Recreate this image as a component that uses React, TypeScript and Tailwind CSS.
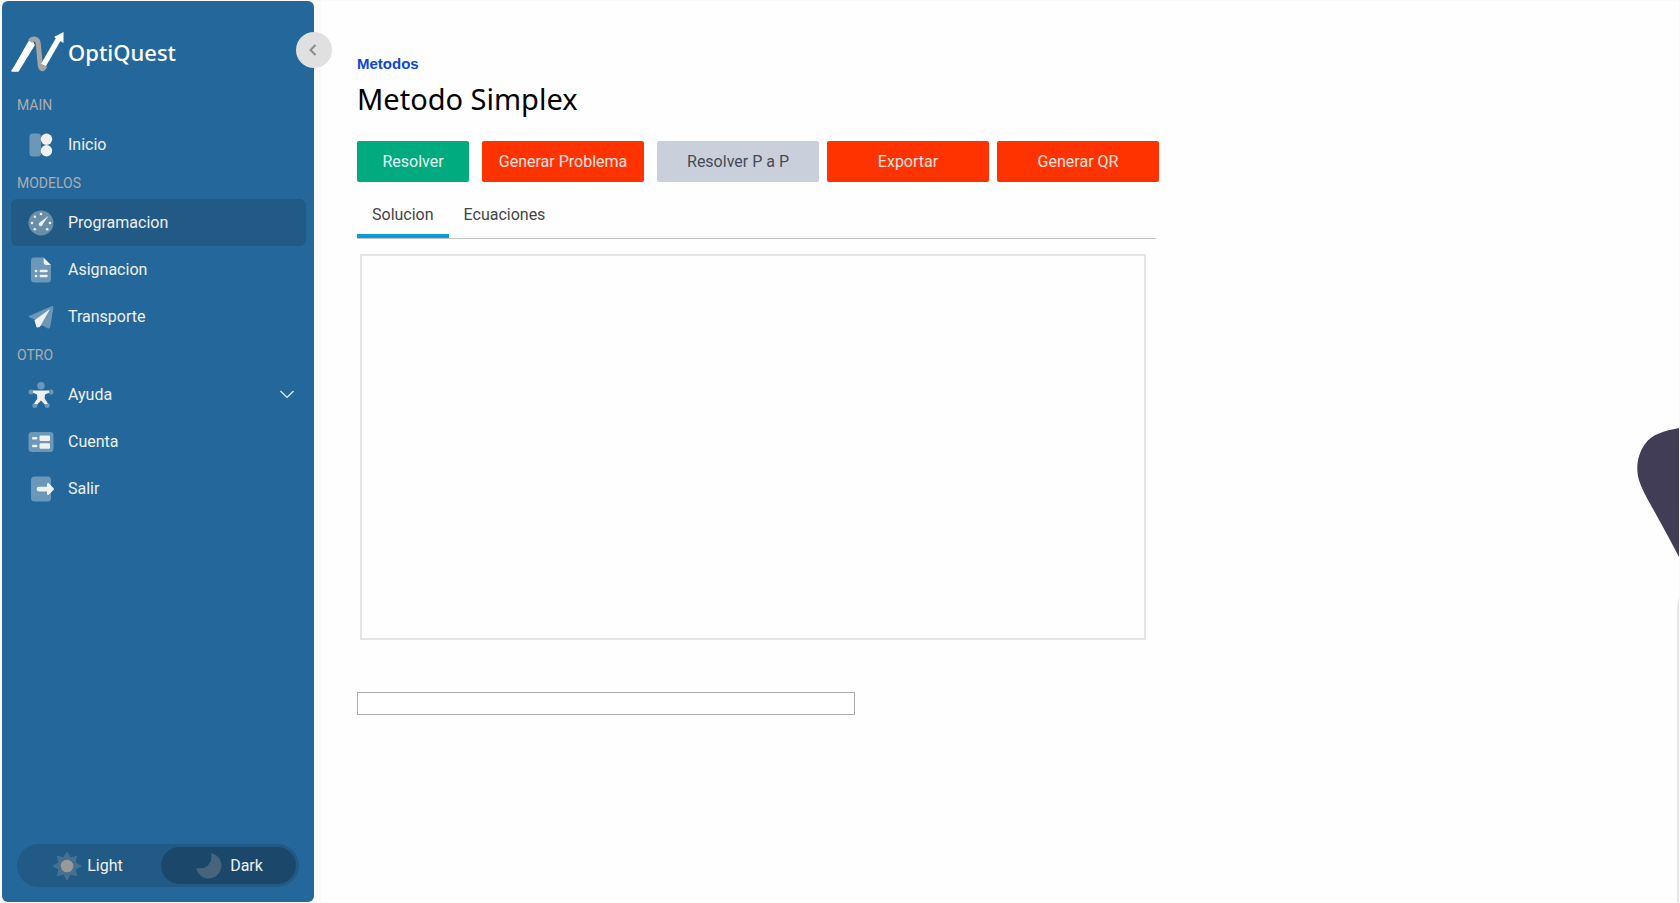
import React, { useState } from "react";

const FAINT = "rgba(240,240,240,0.35)";
const SOLID = "#f0f0f0";

function Logo() {
  return (
    <svg width="54" height="42" viewBox="0 0 54 42" aria-hidden="true">
      <path d="M1 39 H7 L23 13 L21 8.500 Q18.500 8 17.500 10.500 L3 36 Z" fill="#fff" stroke="#fff" strokeWidth="1.500" strokeLinejoin="round" />
      <path d="M19 9.500 C22 5.500 27 6.500 27.300 12 L29 31 C29.400 38 32 38 34 34" fill="none" stroke="#a5a5a5" strokeWidth="5" />
      <path d="M32.500 33 L47.500 7" fill="none" stroke="#fff" strokeWidth="5.500" />
      <path d="M43 5 L52.500 0 L52.500 11 Z" fill="#fff" />
    </svg>
  );
}

function HomeIcon() {
  return (
    <svg width="26" height="26" viewBox="0 0 26 26" aria-hidden="true">
      <rect x="1.500" y="1.500" width="11.500" height="23" rx="3" fill={FAINT} />
      <circle cx="18.500" cy="7.200" r="5.700" fill={SOLID} />
      <circle cx="18.500" cy="18.700" r="5.700" fill={SOLID} />
    </svg>
  );
}

function GaugeIcon() {
  const dots = [[13, 4], [6.8, 6.8], [4, 13], [22, 13], [6.8, 19.2], [19.2, 19.2]];
  return (
    <svg width="26" height="26" viewBox="0 0 26 26" aria-hidden="true">
      <circle cx="13" cy="13" r="12.500" fill={FAINT} />
      {dots.map(([x, y]) => (
        <circle key={`${x}-${y}`} cx={x} cy={y} r="1.300" fill={SOLID} />
      ))}
      <path d="M20.600 5.700 L14.800 14 A2 2 0 1 1 11.700 12.500 Z" fill={SOLID} />
    </svg>
  );
}

function DocumentIcon() {
  return (
    <svg width="26" height="26" viewBox="0 0 26 26" aria-hidden="true">
      <path d="M6 .5 H15.500 V5 Q15.500 8 18 8 H23 V22 Q23 25.500 19.500 25.500 H6.500 Q3 25.500 3 22 V4 Q3 .5 6 .5 Z" fill={FAINT} />
      <path d="M15.500 .5 L23 8 H18 Q15.500 8 15.500 5 Z" fill={SOLID} />
      <circle cx="8" cy="14" r="1.300" fill={SOLID} />
      <circle cx="8" cy="19" r="1.300" fill={SOLID} />
      <path d="M12.800 14 H18.500 M12.800 19 H18.500" stroke={SOLID} strokeWidth="2.500" strokeLinecap="round" />
    </svg>
  );
}

function PlaneIcon() {
  return (
    <svg width="26" height="26" viewBox="0 0 26 26" aria-hidden="true">
      <path d="M1.500 11.800 L23.500 2.200 Q25.700 1.500 25.400 3.800 L22.300 22.800 Q21.700 25 19.500 24.200 L14.500 21.500 L9.500 23.600 L6.500 15.500 L1.500 13.500 Q.2 12.600 1.500 11.800 Z" fill={FAINT} />
      <path d="M22 5 L13 21 Q11.500 23.500 9.500 23.600 Q8.500 23.500 8.200 22.300 L6.500 16.300 Z" fill={SOLID} />
    </svg>
  );
}

function PersonIcon() {
  return (
    <svg width="26" height="26" viewBox="0 0 26 26" aria-hidden="true">
      <circle cx="13" cy="3.700" r="3.700" fill={FAINT} />
      <circle cx="3" cy="10" r="2.500" fill={FAINT} />
      <circle cx="23" cy="10" r="2.500" fill={FAINT} />
      <circle cx="6.800" cy="23.500" r="2.500" fill={FAINT} />
      <circle cx="19.200" cy="23.500" r="2.500" fill={FAINT} />
      <path d="M5 8.500 H21 L21 10.800 L17 12.500 L16.600 16.500 L20 21.500 L16.800 22.500 L13 18.500 L9.200 22.500 L6 21.500 L9.400 16.500 L9 12.500 L5 10.800 Z" fill={SOLID} />
    </svg>
  );
}

function CardIcon() {
  return (
    <svg width="26" height="26" viewBox="0 0 26 26" aria-hidden="true">
      <rect x=".5" y="3" width="25" height="20" rx="3.500" fill={FAINT} />
      <rect x="11.500" y="6.500" width="10.500" height="5.500" rx="1.300" fill={SOLID} />
      <rect x="11.500" y="14.300" width="10.500" height="5.500" rx="1.300" fill={SOLID} />
      <path d="M5.200 9.300 H8.200 M5.200 17 H8.200" stroke={SOLID} strokeWidth="2.400" strokeLinecap="round" />
    </svg>
  );
}

function ExitIcon() {
  return (
    <svg width="26" height="26" viewBox="0 0 26 26" aria-hidden="true">
      <rect x="3" y=".5" width="20" height="25" rx="3.500" fill={FAINT} />
      <path d="M11 10.700 H19 V8 Q19.500 6.500 21 7.500 L25.700 12.300 Q26.200 13 25.700 13.700 L21 18.500 Q19.500 19.500 19 18 V15.500 H11 A2.400 2.400 0 0 1 11 10.700 Z" fill={SOLID} />
    </svg>
  );
}

function SunIcon() {
  return (
    <svg width="30" height="30" viewBox="0 0 30 30" aria-hidden="true">
      <path
        d="M15 1.500 L18.200 7.200 L24.500 5.500 L22.800 11.800 L28.500 15 L22.800 18.200 L24.500 24.500 L18.200 22.800 L15 28.500 L11.800 22.800 L5.500 24.500 L7.200 18.200 L1.500 15 L7.200 11.800 L5.500 5.500 L11.800 7.200 Z"
        fill="#466f90" stroke="#466f90" strokeWidth="1.500" strokeLinejoin="round"
      />
      <circle cx="15" cy="15" r="6.300" fill="#999" />
    </svg>
  );
}

function MoonIcon() {
  return (
    <svg width="26" height="26" viewBox="0 0 26 26" aria-hidden="true">
      <path d="M15 2 Q15.300 0 17.300 .7 A12.800 12.800 0 1 1 .7 17.300 Q0 15.300 2 15 Q8 16.300 11.800 12.500 Q16.300 8 15 2 Z" fill="#47647c" />
    </svg>
  );
}

type Item = { label: string; icon: React.ReactNode; active?: boolean; expandable?: boolean };

const SECTIONS: { title: string; items: Item[] }[] = [
  { title: "MAIN", items: [{ label: "Inicio", icon: <HomeIcon /> }] },
  {
    title: "MODELOS",
    items: [
      { label: "Programacion", icon: <GaugeIcon />, active: true },
      { label: "Asignacion", icon: <DocumentIcon /> },
      { label: "Transporte", icon: <PlaneIcon /> },
    ],
  },
  {
    title: "OTRO",
    items: [
      { label: "Ayuda", icon: <PersonIcon />, expandable: true },
      { label: "Cuenta", icon: <CardIcon /> },
      { label: "Salir", icon: <ExitIcon /> },
    ],
  },
];

function NavItem({ item }: { item: Item }) {
  return (
    <li>
      <a
        href="#"
        aria-current={item.active ? "page" : undefined}
        className={`flex h-[47px] items-center rounded-md pr-3 pl-[17px] text-base text-[#f0f0f0] ${item.active ? "bg-[#205a85]" : ""}`}
      >
        <span className="w-10">{item.icon}</span>
        <span className="flex-1">{item.label}</span>
        {item.expandable && (
          <svg width="14" height="9" viewBox="0 0 14 9" aria-hidden="true">
            <path d="M.5 1 L7 7.500 L13.500 1" fill="none" stroke="#f0f0f0" strokeWidth="1.200" />
          </svg>
        )}
      </a>
    </li>
  );
}

function Sidebar() {
  return (
    <aside className="relative z-10 flex w-[312px] shrink-0 flex-col rounded-md bg-[#24689b]">
      <div className="flex h-[89px] items-center gap-[3px] pt-[14px] pl-[9px]">
        <Logo />
        <span className="font-['Noto_Sans','Open_Sans',sans-serif] text-[22px] font-medium text-white">OptiQuest</span>
      </div>
      <button
        type="button"
        aria-label="Contraer menu"
        className="absolute top-[31px] -right-[18px] flex size-9 items-center justify-center rounded-full bg-[#e0e0e0] pr-0.5"
      >
        <svg width="8" height="12" viewBox="0 0 8 12" aria-hidden="true">
          <path d="M6.500 1 L1.500 6 L6.500 11" fill="none" stroke="#8a8a8a" strokeWidth="2" />
        </svg>
      </button>
      <nav className="flex-1 pr-2 pl-[9px]">
        {SECTIONS.map((section) => (
          <section key={section.title}>
            <h2 className="flex h-[31px] items-center pb-0.5 pl-[6px] text-sm text-[#adadad]">{section.title}</h2>
            <ul>
              {section.items.map((item) => (
                <NavItem key={item.label} item={item} />
              ))}
            </ul>
          </section>
        ))}
      </nav>
      <div className="mr-[15px] mb-[15px] ml-[15px] flex h-[43px] items-center rounded-full bg-[#205a85] p-[3px] text-base text-[#f0f0f0]">
        <button type="button" className="flex h-full flex-1 items-center justify-center gap-[5px] pr-1.5">
          <SunIcon />
          Light
        </button>
        <button type="button" className="flex h-full w-[135px] items-center justify-center gap-2 rounded-full bg-[#1b486a] pl-0.5">
          <MoonIcon />
          Dark
        </button>
      </div>
    </aside>
  );
}

const TABS = ["Solucion", "Ecuaciones"];

export default function App() {
  const [tab, setTab] = useState("Solucion");
  return (
    <div className="flex min-h-screen bg-[#fafafa] py-px pr-px pl-0.5 font-[Roboto,sans-serif]">
      <Sidebar />
      <main className="relative ml-[7px] flex-1 overflow-hidden bg-[#fefefe] pt-[51px] pl-9">
        <p className="font-['Liberation_Sans',Arial,sans-serif] text-[15px] leading-6 font-bold text-[#0a46d8]">Metodos</p>
        <h1 className="font-['Noto_Sans','Open_Sans',sans-serif] text-[29px] leading-[46px] text-black">Metodo Simplex</h1>
        <div className="mt-[19px] flex h-[41px] text-base">
          <button type="button" className="w-28 rounded-xs bg-[#00ab80] text-[#e8f5f0]">Resolver</button>
          <button type="button" className="ml-[13px] w-[162px] rounded-xs bg-[#ff3300] text-[#f5e4e0]">Generar Problema</button>
          <button type="button" disabled className="ml-[13px] w-[162px] rounded-xs bg-[#cad0db] text-[#444c57]">Resolver P a P</button>
          <button type="button" className="ml-2 w-[162px] rounded-xs bg-[#ff3300] text-[#f5e4e0]">Exportar</button>
          <button type="button" className="ml-2 w-[162px] rounded-xs bg-[#ff3300] text-[#f5e4e0]">Generar QR</button>
        </div>
        <div role="tablist" className="mt-[9px] flex h-12 w-[799px] border-b border-[#c3c3c3]">
          {TABS.map((name) => (
            <button
              key={name}
              type="button"
              role="tab"
              aria-selected={tab === name}
              onClick={() => setTab(name)}
              className={`border-b-4 px-[15px] pt-1 text-base text-[#444] ${tab === name ? "border-[#0a9bd9]" : "border-transparent"}`}
            >
              {name}
            </button>
          ))}
        </div>
        <div role="tabpanel" aria-label={tab} className="mt-[15px] ml-[3px] h-[386px] w-[786px] border-2 border-[#e4e4e4]" />
        <input aria-label="Resultado" className="mt-[52px] block h-[23px] w-[498px] border border-[#adadad] bg-white px-1 text-sm outline-none" />
        <svg className="absolute top-[427px] right-0" width="42" height="475" viewBox="0 0 42 475" aria-hidden="true">
          <path d="M42 0 C27 3 15 6 8 16 C0 27 -2 42 3 55 C7 67 22 90 42 129 Z" fill="#413d56" />
          <path d="M42 168 L40 180 V475 H42 Z" fill="#e6e6e6" />
        </svg>
      </main>
    </div>
  );
}
